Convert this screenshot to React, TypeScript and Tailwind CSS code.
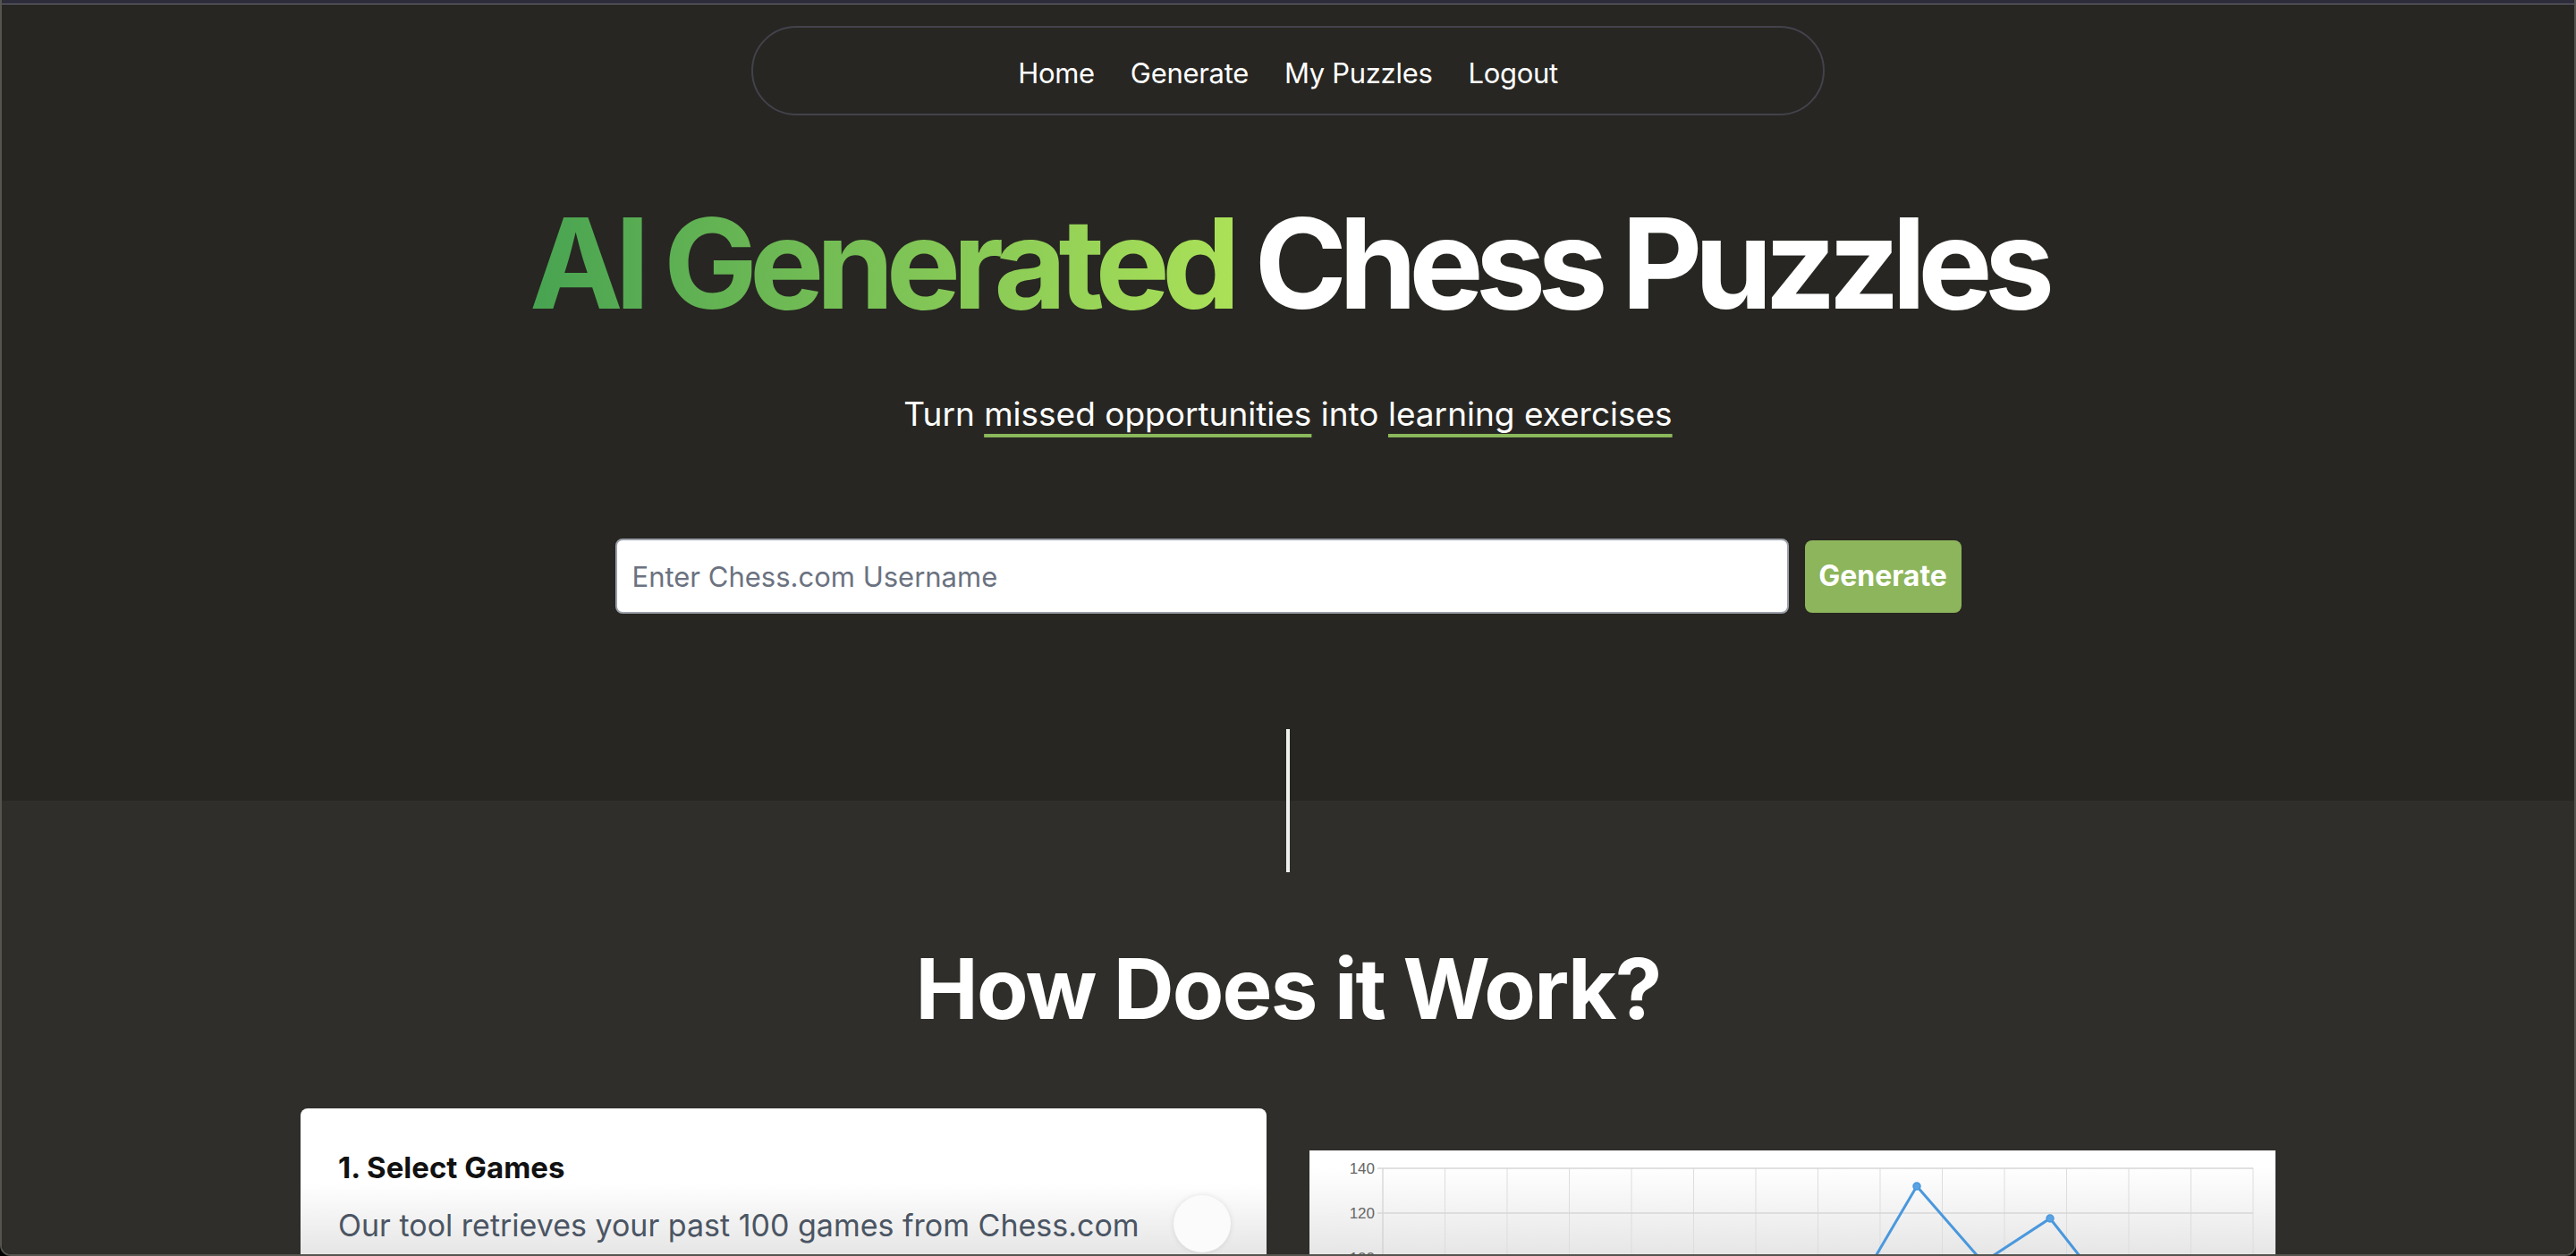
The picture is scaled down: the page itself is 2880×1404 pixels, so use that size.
import React from "react";

const navLinks = ["Home", "Generate", "My Puzzles", "Logout"];

function PriceChart() {
  const left = 82;
  const step = 69.5;
  const cols = Array.from({ length: 15 }, (_, i) => left + i * step);
  const y = (v: number) => 20 + (140 - v) * 2.5;
  const points: [number, number][] = [
    [530, y(78)],
    [604, y(81)],
    [679, y(132)],
    [753, y(98)],
    [828, y(117.6)],
    [902, y(80)],
  ];
  const path = points.map((p, i) => `${i === 0 ? "M" : "L"}${p[0]} ${p[1]}`).join(" ");

  return (
    <svg width="1081" height="300" viewBox="0 0 1081 300" className="block">
      {cols.map((x, i) => (
        <line key={i} x1={x} y1={20} x2={x} y2={300} stroke={i === 0 ? "#c9c9c9" : "#dddddd"} strokeWidth={1} />
      ))}
      {[140, 120, 100, 80].map((v) => (
        <g key={v}>
          <line x1={left - 6} y1={y(v)} x2={left + 14 * step} y2={y(v)} stroke="#d6d6d6" strokeWidth={1.5} />
          <text x={left - 9} y={y(v) + 6} textAnchor="end" fontSize="17" fill="#666" fontFamily="Liberation Sans, sans-serif">
            {v}
          </text>
        </g>
      ))}
      <path d={path} fill="none" stroke="#4a98dd" strokeWidth={3} strokeLinejoin="round" />
      {points.map((p, i) => (
        <circle key={i} cx={p[0]} cy={p[1]} r={4} fill="#5aa2e2" stroke="#4a98dd" strokeWidth={1.5} />
      ))}
    </svg>
  );
}

export default function App() {
  return (
    <div className="h-[1404px] w-full bg-black font-['Inter',sans-serif]">
      <div className="flex h-full flex-col overflow-hidden rounded-b-[12px] border-x-2 border-b-2 border-[#55544f]">
        <div className="h-[5px] shrink-0 border-b border-[#6c6b75] bg-[#2d2c3a]" />

        {/* hero */}
        <section className="flex flex-col items-center bg-[#272622]">
          <nav className="mt-6 flex h-[100px] w-[1200px] items-center justify-center gap-[40px] rounded-full border-2 border-[#43424b] pt-[4px] text-[31px] tracking-[-0.01em] text-white">
            {navLinks.map((l) => (
              <a key={l} href="#" className="leading-none">
                {l}
              </a>
            ))}
          </nav>

          <h1 className="mt-[95px] text-[140px] font-bold leading-none tracking-[-0.064em] text-white">
            <span className="bg-gradient-to-r from-[#47a351] to-[#abe158] bg-clip-text text-transparent">AI Generated</span>{" "}
            Chess Puzzles
          </h1>

          <p className="mt-[72px] text-[37px] leading-[54px] text-white">
            Turn{" "}
            <span className="underline decoration-[#8bb85a] decoration-4 underline-offset-[9px]">missed opportunities</span>{" "}
            into{" "}
            <span className="underline decoration-[#8bb85a] decoration-4 underline-offset-[9px]">learning exercises</span>
          </p>

          <div className="mt-[112px] flex items-center gap-[18px]">
            <input
              type="text"
              placeholder="Enter Chess.com Username"
              className="h-[84px] w-[1312px] rounded-lg border-2 border-[#9ca0aa] bg-white px-[17px] text-[31px] text-gray-900 placeholder:text-[#6b7280] outline-none"
            />
            <button className="h-[81px] w-[175px] rounded-lg bg-[#8db55b] text-[32px] font-bold text-white">Generate</button>
          </div>

          <div className="mt-[129px] h-[80px] w-[4px] bg-[#f0f0ee]" />
        </section>

        {/* how it works */}
        <section className="flex flex-1 flex-col items-center bg-[#2f2e2a]">
          <div className="h-[80px] w-[4px] bg-[#f0f0ee]" />
          <h2 className="mt-[83px] text-[94px] font-bold leading-none tracking-[-0.02em] text-white">How Does it Work?</h2>

          <div className="mt-[87px] grid w-[2208px] grid-cols-2 gap-12">
            <div className="h-[420px] rounded-lg bg-gradient-to-b from-white from-[20%] to-[#e4e4e4] to-[40%] px-[42px] pt-[42px]">
              <h3 className="text-[33px] font-bold leading-[48px] text-[#111]">1. Select Games</h3>
              <div className="mt-[17px] flex items-start justify-between">
                <p className="text-[34px] leading-[48px] text-[#4b5563]">Our tool retrieves your past 100 games from Chess.com</p>
                <div className="-mr-[2px] -mt-[10px] h-16 w-16 rounded-full bg-[#fbfbfb] shadow-[0_0_6px_rgba(0,0,0,0.1)]" />
              </div>
            </div>

            <div className="mt-[47px] h-[380px] bg-gradient-to-b from-white from-[5%] to-[#e2e2e2] to-[35%]">
              <PriceChart />
            </div>
          </div>
        </section>
      </div>
    </div>
  );
}
